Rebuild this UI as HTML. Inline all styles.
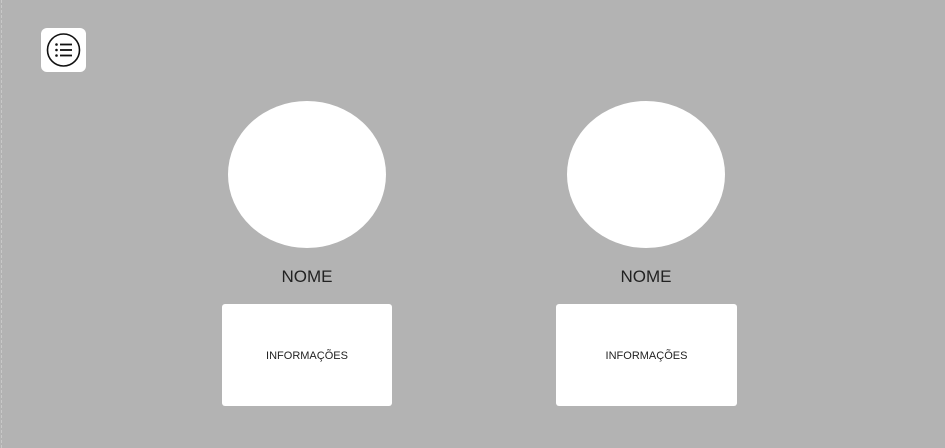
<!DOCTYPE html><html><head><style>
body{margin:0;width:945px;height:448px;background:#b3b3b3;position:relative;overflow:hidden;font-family:"Liberation Sans",sans-serif;color:#222}
.edge{position:absolute;left:1px;top:0;width:0;height:448px;border-left:1px dashed #c8c8c8}
.btn{position:absolute;left:41px;top:28px;width:45px;height:44px;background:#fff;border-radius:6px}
.c{position:absolute;top:101px;width:158px;height:147px;background:#fff;border-radius:50%}
.n{position:absolute;top:267px;width:160px;text-align:center;font-size:17px}
.card{position:absolute;top:304px;height:102px;background:#fff;border-radius:3px;display:flex;align-items:center;justify-content:center;font-size:11px;padding-top:1px;box-sizing:border-box}
</style></head><body>
<div class="edge"></div>
<div class="btn"><svg width="45" height="44" viewBox="0 0 45 44"><circle cx="22.5" cy="22" r="16" fill="none" stroke="#111" stroke-width="1.6"/><g fill="#111"><circle cx="15.5" cy="16.5" r="1.3"/><circle cx="15.5" cy="22" r="1.3"/><circle cx="15.5" cy="27.5" r="1.3"/></g><g stroke="#111" stroke-width="1.8"><line x1="19" y1="16.5" x2="31" y2="16.5"/><line x1="19" y1="22" x2="31" y2="22"/><line x1="19" y1="27.5" x2="31" y2="27.5"/></g></svg></div>
<div class="c" style="left:228px"></div>
<div class="c" style="left:567px"></div>
<div class="n" style="left:227px">NOME</div>
<div class="n" style="left:566px">NOME</div>
<div class="card" style="left:222px;width:170px">INFORMAÇÕES</div>
<div class="card" style="left:556px;width:181px">INFORMAÇÕES</div>
</body></html>
